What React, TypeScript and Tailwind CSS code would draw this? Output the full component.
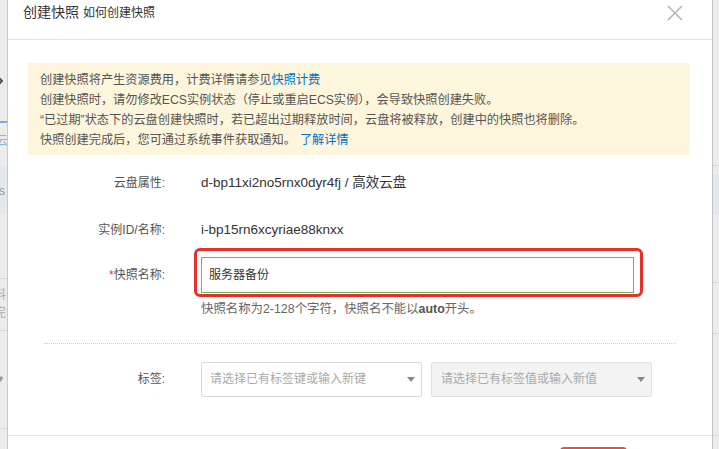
import { ChevronRight } from 'lucide-react';

const font = { fontFamily: '"Liberation Sans", "Noto Sans CJK SC", sans-serif' };

function Caret() {
  return (
    <svg width="8" height="5" viewBox="0 0 8 5" className="shrink-0">
      <path d="M0 0 L8 0 L4 5 Z" fill="#888" />
    </svg>
  );
}

export default function App() {
  return (
    <div
      className="w-[719px] h-[449px] overflow-hidden flex bg-[#e6e6e6] text-[12px] text-[#333]"
      style={font}
    >
      {/* Page behind the dialog, left */}
      <div className="w-[8px] shrink-0 relative bg-[#ececec] border-r border-[#c9c9c9] overflow-hidden">
        <ChevronRight size={16} strokeWidth={3} className="absolute left-[-8px] top-[73px] text-[#555]" />
        <div className="absolute left-0 top-[121px] w-full h-[2px] bg-[#7fa9d8]" />
        <span className="absolute left-[-4px] top-[132px] text-[12px] text-[#8fb3dc]">云</span>
        <div className="absolute left-0 top-[166px] w-full h-[48px] bg-[#e3e8ef]" />
        <span className="absolute left-[-5px] top-[182px] text-[12px] text-[#999]">-s</span>
        <div className="absolute left-0 top-[278px] w-full h-[1px] bg-[#d6d6d6]" />
        <span className="absolute left-[-6px] top-[286px] text-[12px] leading-[18px] text-[#aaa]">料<br />完</span>
        <div className="absolute left-0 top-[330px] w-full h-[1px] bg-[#d6d6d6]" />
        <span className="absolute left-[-4px] top-[370px] text-[12px] text-[#999]">♥</span>
        <div className="absolute left-0 top-[428px] w-full h-[1px] bg-[#d6d6d6]" />
      </div>

      {/* Dialog */}
      <div className="flex-1 bg-white flex flex-col">
        <div className="h-[40px] shrink-0 border-b border-[#e5e5e5] flex items-center pl-[15px] pr-[29px] pb-[14px]">
          <span className="text-[14px] text-[#333]">创建快照</span>
          <span className="ml-[4px] text-[12px] text-[#333]">如何创建快照</span>
          <svg width="16" height="16" viewBox="0 0 16 16" className="ml-auto">
            <path d="M1 1 L15 15 M15 1 L1 15" stroke="#b5b5b5" strokeWidth="1.6" />
          </svg>
        </div>

        <div className="flex-1 flex flex-col">
          <div className="mt-[23px] ml-[20px] mr-[22px] bg-[#fdf6dc] pl-[12px] pt-[7px] pb-[5px] text-[12.2px] leading-[20px] text-[#555]">
            <p>
              创建快照将产生资源费用，计费详情请参见<span className="text-[#0070cc]">快照计费</span>
            </p>
            <p>创建快照时，请勿修改ECS实例状态（停止或重启ECS实例），会导致快照创建失败。</p>
            <p>“已过期”状态下的云盘创建快照时，若已超出过期释放时间，云盘将被释放，创建中的快照也将删除。</p>
            <p>
              快照创建完成后，您可通过系统事件获取通知。<span className="ml-[4px] text-[#0070cc]">了解详情</span>
            </p>
          </div>

          <div className="mt-[18px] flex items-center h-[20px]">
            <span className="w-[157px] text-right text-[#555]">云盘属性:</span>
            <span className="ml-[36px] text-[13.5px] text-[#333]">d-bp11xi2no5rnx0dyr4fj / 高效云盘</span>
          </div>

          <div className="mt-[27px] flex items-center h-[20px]">
            <span className="w-[157px] text-right text-[#555]">实例ID/名称:</span>
            <span className="ml-[36px] text-[13.5px] text-[#333]">i-bp15rn6xcyriae88knxx</span>
          </div>

          <div className="mt-[17px] flex items-center h-[36px]">
            <span className="w-[157px] text-right text-[#555]">
              <span className="text-[#e0302a]">*</span>快照名称:
            </span>
            <div className="ml-[36px] relative">
              <div className="w-[433px] h-[36px] border border-[#6fb25a] flex items-center pl-[7px] text-[12px] text-[#333]">
                服务器备份
              </div>
              <div className="absolute left-[-7px] top-[-9px] right-[-9px] bottom-[-4px] border-[3px] border-[#e3322b] rounded-[6px] pointer-events-none" />
            </div>
          </div>

          <p className="mt-[7px] ml-[193px] text-[12.4px] text-[#666]">
            快照名称为2-128个字符，快照名不能以<b className="text-[#555]">auto</b>开头。
          </p>

          <div className="mt-[24px] ml-[36px] mr-[36px] border-t border-dotted border-[#cfcfcf]" />

          <div className="mt-[18px] flex items-center h-[35px]">
            <span className="w-[157px] text-right text-[#555]">标签:</span>
            <div className="ml-[36px] w-[221px] h-[35px] border border-[#d9d9d9] rounded-[2px] flex items-center pl-[8px] pr-[6px] text-[#aaa]">
              <span className="flex-1">请选择已有标签键或输入新键</span>
              <Caret />
            </div>
            <div className="ml-[9px] w-[221px] h-[35px] border border-[#e0e0e0] rounded-[2px] bg-[#f3f3f3] flex items-center pl-[9px] pr-[6px] text-[#aaa]">
              <span className="flex-1">请选择已有标签值或输入新值</span>
              <Caret />
            </div>
          </div>

          <div className="mt-auto h-[14px] border-t border-[#e8e8e8] flex items-start">
            <div className="ml-[552px] mt-[11px] w-[67px] h-[10px] rounded-t-[4px] bg-[#e2533f]" />
          </div>
        </div>
      </div>

      {/* Page behind the dialog, right */}
      <div className="w-[7px] shrink-0 relative bg-[#ececec] border-l border-[#c4c4c4] overflow-hidden">
        <div className="absolute left-0 top-[165px] w-full h-[1px] bg-[#d6d6d6]" />
        <div className="absolute left-0 top-[175px] w-full h-[40px] bg-[#e2e7ef]" />
        <div className="absolute left-0 top-[282px] w-full h-[1px] bg-[#d6d6d6]" />
        <div className="absolute left-0 top-[333px] w-full h-[1px] bg-[#d6d6d6]" />
        <div className="absolute left-0 top-[435px] w-full h-[1px] bg-[#d6d6d6]" />
      </div>
    </div>
  );
}
